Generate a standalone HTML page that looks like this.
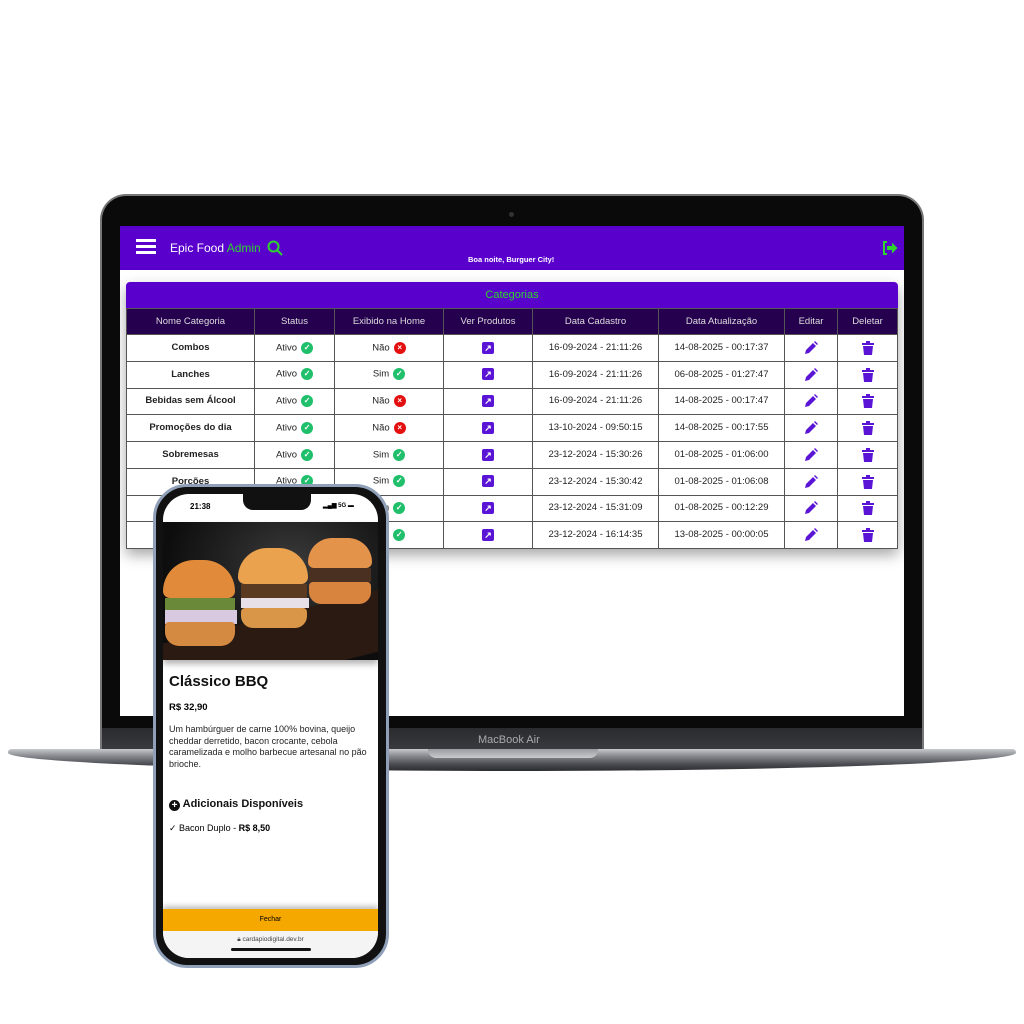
<!DOCTYPE html>
<html><head><meta charset="utf-8"><style>
*{box-sizing:border-box;margin:0;padding:0}
body{width:1024px;height:1024px;background:#fff;position:relative;overflow:hidden;font-family:"Liberation Sans",sans-serif}
.abs{position:absolute}
#lid{left:100px;top:194px;width:824px;height:560px;background:#0a0a0a;border-radius:26px 26px 0 0;border:2px solid #777;border-bottom:none}
#chin{left:102px;top:728px;width:820px;height:22px;background:linear-gradient(#2a2b2e,#3a3b40)}
#base{left:8px;top:749px;width:1008px;height:22px;background:linear-gradient(#c8c9cc 0,#8b8d92 30%,#4a4b50 70%,#2b2c30 100%);border-radius:4px 4px 60% 60%/4px 4px 100% 100%}
#notch{left:428px;top:749px;width:170px;height:9px;background:linear-gradient(#9a9ba0,#c9cace);border-radius:0 0 8px 8px}
#screen{left:120px;top:226px;width:784px;height:490px;background:#fff;overflow:hidden}
#hdr{left:0;top:0;width:784px;height:44px;background:#5a00cc}
table{border-collapse:collapse;font-size:9.5px;color:#222;table-layout:fixed}
td,th{border:1px solid #555;text-align:center;vertical-align:middle;height:26.75px;padding:0;line-height:12px}
th{background:#25004f;color:#ddd;font-weight:normal;height:26px}
.ck,.x{display:inline-block;width:12px;height:12px;border-radius:50%;vertical-align:middle;margin-left:4px;color:#fff;font-size:8px;line-height:12px;font-weight:bold}
.ck{background:#1fbf6b}.x{background:#e41010}
.ar{display:inline-block;width:12px;height:12px;background:#5a14d6;border-radius:2px;color:#fff;font-size:9px;line-height:12px;font-weight:bold;vertical-align:middle}
svg.i{vertical-align:middle}
#phone{left:153px;top:484px;width:236px;height:484px;background:#111;border-radius:34px;border:3px solid #8fa0b8}
#ps{left:163px;top:494px;width:215px;height:464px;background:#fff;border-radius:26px;overflow:hidden}
</style></head><body>
<div id="lid" class="abs"></div>
<div class="abs" style="left:509px;top:212px;width:5px;height:5px;border-radius:50%;background:#333"></div>
<div id="chin" class="abs"></div>
<div class="abs" style="left:478px;top:734px;font-size:11px;color:#aaa">MacBook Air</div>
<div id="base" class="abs"></div>
<div id="notch" class="abs"></div>
<div id="screen" class="abs">
 <div id="hdr" class="abs">
  <div class="abs" style="left:16px;top:13px;width:20px;height:3px;background:#fff;box-shadow:0 6px 0 #fff,0 12px 0 #fff"></div>
  <div class="abs" style="left:50px;top:15px;font-size:12px;color:#fff">Epic Food <span style="color:#2fd32f">Admin</span></div>
  <svg class="abs" style="left:147px;top:14px" width="16" height="16" viewBox="0 0 16 16"><circle cx="6.5" cy="6.5" r="5" fill="none" stroke="#2fd32f" stroke-width="2"/><path d="M10 10l5 5" stroke="#2fd32f" stroke-width="2"/></svg>
  <div class="abs" style="left:348px;top:29px;font-size:7.5px;font-weight:bold;color:#fff">Boa noite, Burguer City!</div>
  <svg class="abs" style="left:762px;top:15px" width="16" height="14" viewBox="0 0 16 14"><path d="M5 1H2v12h3" fill="none" stroke="#2fd32f" stroke-width="2"/><path d="M5 5h5V1.5L15.5 7 10 12.5V9H5z" fill="#2fd32f"/></svg>
 </div>
 <div class="abs" style="left:6px;top:56px;width:772px;box-shadow:0 6px 14px rgba(0,0,0,.35);border-radius:4px 4px 0 0">
  <div style="height:26px;background:#5a00cc;border-radius:4px 4px 0 0;color:#2fd32f;font-size:11px;text-align:center;line-height:26px">Categorias</div>
  <div id="rows"></div>
 </div>
</div>
<div id="phone" class="abs"></div>
<div id="ps" class="abs">
 <div class="abs" style="left:27px;top:8px;font-size:8px;font-weight:bold">21:38</div>
 <div class="abs" style="left:80px;top:0;width:68px;height:16px;background:#111;border-radius:0 0 10px 10px"></div>
 <div class="abs" style="left:160px;top:8px;font-size:6px;font-weight:bold">▂▄▆ 5G ▬</div>
 <div class="abs" style="left:0;top:28px;width:215px;height:138px;background:radial-gradient(ellipse at 60% 30%,#3a3a3a,#0d0d0d 70%);overflow:hidden;box-shadow:0 4px 6px rgba(0,0,0,.3)">
  <div class="abs" style="left:-20px;top:95px;width:260px;height:60px;background:#2a1a12;transform:rotate(-14deg)"></div>
  <div class="abs" style="left:0;top:38px;width:72px;height:38px;border-radius:36px 36px 8px 8px;background:#e08a3a"></div>
  <div class="abs" style="left:2px;top:76px;width:70px;height:12px;background:#6a8a3a"></div>
  <div class="abs" style="left:2px;top:88px;width:72px;height:14px;background:#d8c8e0"></div>
  <div class="abs" style="left:2px;top:100px;width:70px;height:24px;border-radius:4px 4px 14px 14px;background:#d58a42"></div>
  <div class="abs" style="left:75px;top:26px;width:70px;height:36px;border-radius:35px 35px 8px 8px;background:#eaa24e"></div>
  <div class="abs" style="left:78px;top:62px;width:66px;height:14px;background:#5a3a20"></div>
  <div class="abs" style="left:78px;top:76px;width:68px;height:10px;background:#e8e0e8"></div>
  <div class="abs" style="left:78px;top:86px;width:66px;height:20px;border-radius:4px 4px 12px 12px;background:#d99548"></div>
  <div class="abs" style="left:145px;top:16px;width:64px;height:30px;border-radius:32px 32px 8px 8px;background:#e4944a"></div>
  <div class="abs" style="left:146px;top:46px;width:62px;height:14px;background:#4a3020"></div>
  <div class="abs" style="left:146px;top:60px;width:62px;height:22px;border-radius:4px 4px 12px 12px;background:#d8843e"></div>
 </div>
 <div class="abs" style="left:6px;top:179px;font-size:15px;font-weight:bold;color:#111">Clássico BBQ</div>
 <div class="abs" style="left:6px;top:208px;font-size:9.5px;font-weight:bold">R$ 32,90</div>
 <div class="abs" style="left:6px;top:230px;width:206px;font-size:9px;line-height:11.5px;color:#222">Um hambúrguer de carne 100% bovina, queijo cheddar derretido, bacon crocante, cebola caramelizada e molho barbecue artesanal no pão brioche.</div>
 <div class="abs" style="left:6px;top:304px;font-size:11px;font-weight:bold;color:#111"><span style="display:inline-block;width:11px;height:11px;border-radius:50%;background:#111;color:#fff;font-size:10px;line-height:11px;text-align:center;vertical-align:-1px">+</span> Adicionais Disponíveis</div>
 <div class="abs" style="left:6px;top:329px;font-size:9px">✓ Bacon Duplo - <b>R$ 8,50</b></div>
 <div class="abs" style="left:0;top:415px;width:215px;height:22px;background:#f5a800;font-size:7px;text-align:center;line-height:22px;box-shadow:0 -3px 5px rgba(0,0,0,.25)">Fechar</div>
 <div class="abs" style="left:0;top:437px;width:215px;height:27px;background:#f4f4f4;font-size:6.5px;color:#444;text-align:center;padding-top:5px">🔒︎ cardapiodigital.dev.br</div>
 <div class="abs" style="left:68px;top:454px;width:80px;height:3px;border-radius:2px;background:#111"></div>
</div>
<script>
var d=[["Combos",0,"16-09-2024 - 21:11:26","14-08-2025 - 00:17:37"],["Lanches",1,"16-09-2024 - 21:11:26","06-08-2025 - 01:27:47"],["Bebidas sem Álcool",0,"16-09-2024 - 21:11:26","14-08-2025 - 00:17:47"],["Promoções do dia",0,"13-10-2024 - 09:50:15","14-08-2025 - 00:17:55"],["Sobremesas",1,"23-12-2024 - 15:30:26","01-08-2025 - 01:06:00"],["Porções",1,"23-12-2024 - 15:30:42","01-08-2025 - 01:06:08"],["Drinks",1,"23-12-2024 - 15:31:09","01-08-2025 - 00:12:29"],["Outros",1,"23-12-2024 - 16:14:35","13-08-2025 - 00:00:05"]];
var pen='<svg class="i" width="14" height="14" viewBox="0 0 14 14"><path d="M1 13l1-4 7-7 3 3-7 7z M10 1l1-1 3 3-1 1z" fill="#5a14d6"/></svg>';
var tr='<svg class="i" width="12" height="14" viewBox="0 0 12 14"><path d="M0 2h12v2H0z M4 0h4v2H4z M1 5h10l-1 9H2z" fill="#5a14d6"/></svg>';
var h='<table style="width:772px"><tr><th style="width:128px">Nome Categoria</th><th style="width:80px">Status</th><th style="width:109px">Exibido na Home</th><th style="width:89px">Ver Produtos</th><th style="width:126px">Data Cadastro</th><th style="width:126px">Data Atualização</th><th style="width:53px">Editar</th><th>Deletar</th></tr>';
d.forEach(function(r){h+='<tr><td><b>'+r[0]+'</b></td><td>Ativo<span class="ck">✓</span></td><td>'+(r[1]?'Sim<span class="ck">✓</span>':'Não<span class="x">×</span>')+'</td><td><span class="ar">↗</span></td><td>'+r[2]+'</td><td>'+r[3]+'</td><td>'+pen+'</td><td>'+tr+'</td></tr>';});
document.getElementById('rows').innerHTML=h+'</table>';
</script>
</body></html>
